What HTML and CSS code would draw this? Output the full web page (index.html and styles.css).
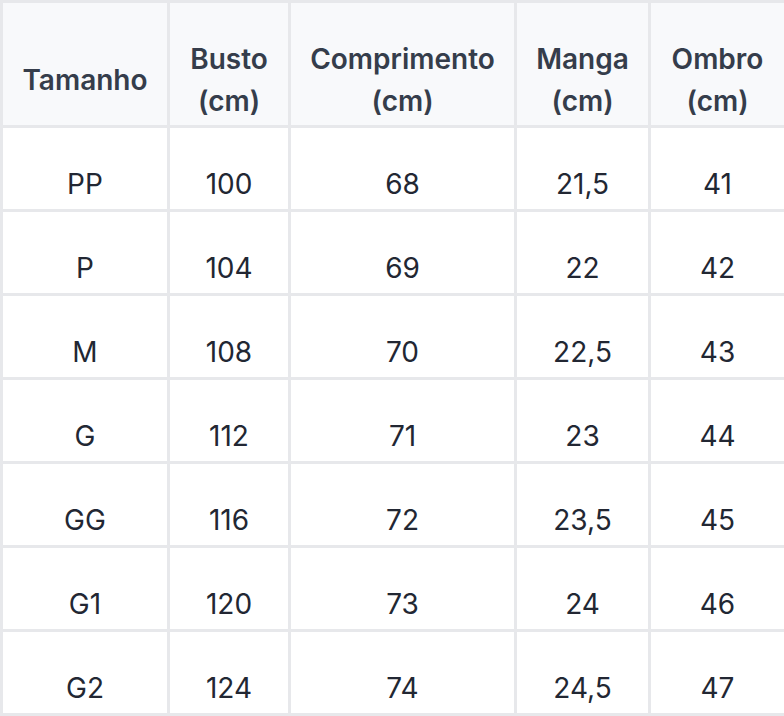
FILE: index.html
```html
<!DOCTYPE html>
<html lang="pt">
<head>
<meta charset="utf-8">
<title>Tabela de medidas</title>
<link rel="stylesheet" href="styles.css">
</head>
<body>
<table class="sizes">
  <colgroup>
    <col class="c1"><col class="c2"><col class="c3"><col class="c4"><col class="c5">
  </colgroup>
  <thead>
    <tr>
      <th>Tamanho</th>
      <th>Busto<br>(cm)</th>
      <th>Comprimento<br>(cm)</th>
      <th>Manga<br>(cm)</th>
      <th>Ombro<br>(cm)</th>
    </tr>
  </thead>
  <tbody>
    <tr><td>PP</td><td>100</td><td>68</td><td>21,5</td><td>41</td></tr>
    <tr><td>P</td><td>104</td><td>69</td><td>22</td><td>42</td></tr>
    <tr><td>M</td><td>108</td><td>70</td><td>22,5</td><td>43</td></tr>
    <tr><td>G</td><td>112</td><td>71</td><td>23</td><td>44</td></tr>
    <tr><td>GG</td><td>116</td><td>72</td><td>23,5</td><td>45</td></tr>
    <tr><td>G1</td><td>120</td><td>73</td><td>24</td><td>46</td></tr>
    <tr><td>G2</td><td>124</td><td>74</td><td>24,5</td><td>47</td></tr>
  </tbody>
</table>
</body>
</html>
```

FILE: styles.css
```css
html, body {
  margin: 0;
  padding: 0;
  background: #ffffff;
}

.sizes {
  width: 784px;
  table-layout: fixed;
  border-collapse: collapse;
  font-family: Inter, "Noto Sans", "Liberation Sans", sans-serif;
  text-align: center;
}

.c1 { width: 167px; }
.c2 { width: 121px; }
.c3 { width: 226px; }
.c4 { width: 134px; }
.c5 { width: 136px; }

.sizes th,
.sizes td {
  border: 3px solid #e7e8eb;
  vertical-align: middle;
  padding: 31px 2px 0;
}

.sizes th {
  height: 125px;
  box-sizing: border-box;
  background: #f8f9fb;
  color: #353d4b;
  font-size: 28px;
  font-weight: 600;
  line-height: 42px;
}

.sizes td {
  height: 84px;
  box-sizing: border-box;
  color: #222733;
  font-size: 28px;
  font-weight: 400;
  line-height: 36px;
}
```
